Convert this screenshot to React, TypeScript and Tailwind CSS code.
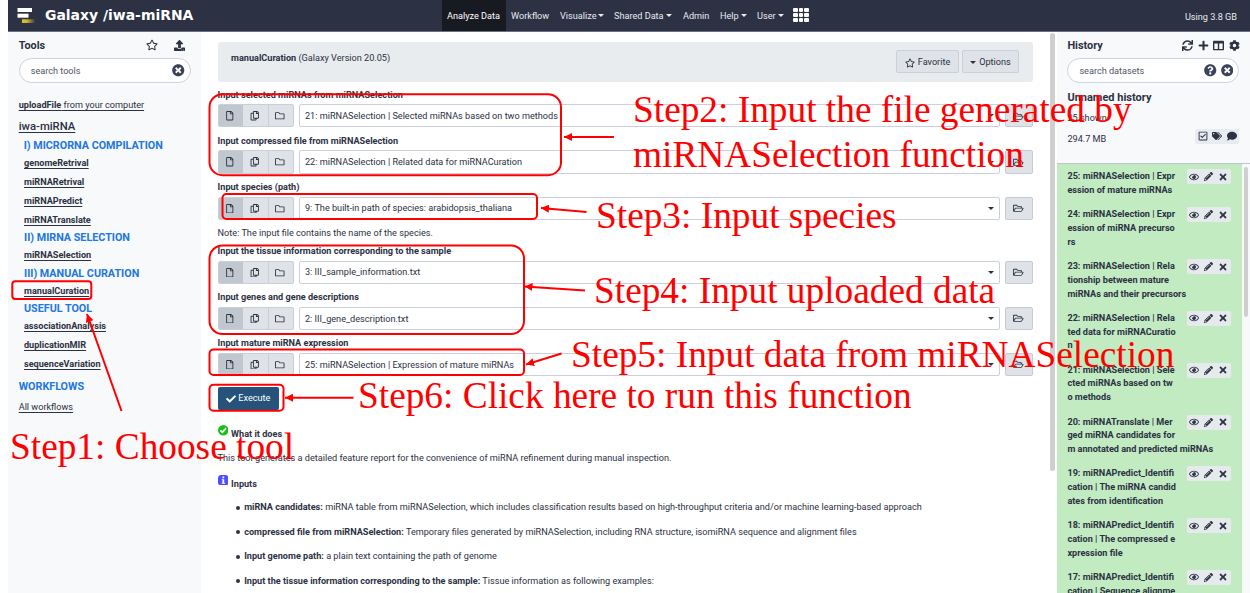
import React from "react";
import {
  FaCheck, FaCog, FaColumns, FaComment, FaPencilAlt, FaPlus, FaQuestionCircle,
  FaRegCheckSquare, FaRegCopy, FaRegEye, FaRegFile, FaRegFolder, FaRegFolderOpen, FaRegStar,
  FaSync, FaTags, FaTimes, FaTimesCircle, FaUpload,
} from "react-icons/fa";

function NavItem({ label, caret, active, width }: { label: string; caret?: boolean; active?: boolean; width: string }) {
  return (
    <div className={`flex h-full shrink-0 items-center pt-[3px] pl-[5px] ${width} ${active ? "bg-[#181a22] text-white" : ""}`}>
      {label}
      {caret && <span className="mb-[3px] ml-[2px] border-x-[3px] border-t-[3px] border-x-transparent border-t-current" />}
    </div>
  );
}

function Header() {
  return (
    <header className="flex h-[32px] shrink-0 items-stretch border-b border-[#6b7080] bg-[#2c3143] text-[9.14px] text-[#e9eaef]">
      <svg className="mt-[7px] ml-[9px] h-[17px] w-[19px] shrink-0" viewBox="0 0 19 17">
        <defs>
          <linearGradient id="gold"><stop offset="0" stopColor="#e0c32b" /><stop offset=".35" stopColor="#d3b82c" /><stop offset="1" stopColor="#2c3143" /></linearGradient>
        </defs>
        <rect x="0.5" y="1" width="14.5" height="4" fill="#fff" />
        <rect x="0.5" y="6.7" width="11" height="4" fill="#fff" />
        <rect x="5" y="12.3" width="13.5" height="3.7" fill="url(#gold)" />
      </svg>
      <div className="ml-[9px] flex w-[397px] shrink-0 items-center pb-[1px] font-['DejaVu_Sans'] text-[13.95px] font-bold whitespace-nowrap text-white">Galaxy /iwa-miRNA</div>
      <NavItem label="Analyze Data" active width="w-[64px]" />
      <NavItem label="Workflow" width="w-[49px]" />
      <NavItem label="Visualize" caret width="w-[54px]" />
      <NavItem label="Shared Data" caret width="w-[69px]" />
      <NavItem label="Admin" width="w-[37px]" />
      <NavItem label="Help" caret width="w-[37px]" />
      <NavItem label="User" caret width="w-[41px]" />
      <div className="mt-[8px] grid h-[14px] w-[16px] shrink-0 grid-cols-3 gap-[1px]">
        {Array.from({ length: 9 }, (_, i) => <span key={i} className="rounded-[1px] bg-white" />)}
      </div>
      <div className="ml-auto flex items-center pt-[4px] pr-[13px]">Using 3.8 GB</div>
    </header>
  );
}

const toolItems = [
  { t: "genomeRetrival", h: "h-[19.5px]" },
  { t: "miRNARetrival", h: "h-[19px]" },
  { t: "miRNAPredict", h: "h-[19px]" },
  { t: "miRNATranslate", h: "h-[18.5px]" },
  { t: "II) MIRNA SELECTION", h: "h-[17px]", head: true },
  { t: "miRNASelection", h: "h-[18.5px]" },
  { t: "III) MANUAL CURATION", h: "h-[17px]", head: true },
  { t: "manualCuration", h: "h-[18px]" },
  { t: "USEFUL TOOL", h: "h-[17px]", head: true },
  { t: "associationAnalysis", h: "h-[19px]" },
  { t: "duplicationMIR", h: "h-[19px]" },
  { t: "sequenceVariation", h: "h-[19px]" },
];

function SearchBox({ label, help }: { label: string; help?: boolean }) {
  return (
    <div className="mt-[4px] flex h-[25px] w-[172px] shrink-0 items-center rounded-full border border-[#cfd2e0] bg-white pr-[5px] pl-[11px] text-[9.14px] text-[#50566a]">
      <span className="pt-[3px]">{label}</span>
      <span className="ml-auto flex gap-[4px] text-[12.5px] text-[#3a4159]">
        {help && <FaQuestionCircle />}
        <FaTimesCircle />
      </span>
    </div>
  );
}

function ToolPanel() {
  return (
    <aside className="flex w-[193px] shrink-0 flex-col bg-[#f8f9fb] pl-[10.7px]">
      <div className="flex h-[22px] items-end">
        <span className="w-[127.3px] text-[10.8px] leading-[17px] font-bold">Tools</span>
        <FaRegStar className="mb-[3px] text-[12px]" />
        <FaUpload className="mb-[3.5px] ml-[16px] text-[11px]" />
      </div>
      <SearchBox label="search tools" />
      <div className="mt-[12px] flex h-[20px] items-center pt-[1px] text-[9.14px]">
        <span className="underline underline-offset-2"><b>uploadFile</b> from your computer</span>
      </div>
      <div className="flex h-[22px] items-center pt-[2px] text-[11.3px] font-medium underline underline-offset-2">iwa-miRNA</div>
      <div className="flex h-[16px] items-center pt-[2px] pl-[5px] text-[10.75px] font-bold text-[#2077df]">I) MICRORNA COMPILATION</div>
      {toolItems.map((i) => (
        <div key={i.t} className={`flex shrink-0 items-center pl-[5.3px] ${i.h} ${i.head ? "pt-[2px] text-[10.75px] font-bold text-[#2077df]" : "pt-[2px] text-[9.14px] font-bold underline underline-offset-2"}`}>{i.t}</div>
      ))}
      <div className="flex h-[25px] items-center pt-[2px] text-[10.75px] font-bold text-[#2077df]">WORKFLOWS</div>
      <div className="flex h-[17px] items-center pt-[2px] text-[9.14px] underline underline-offset-2">All workflows</div>
    </aside>
  );
}

function Field({ label, value, note }: { label: string; value: string; note?: string }) {
  return (
    <>
      <div className="h-[46.2px] shrink-0">
        <div className="h-[17.8px] text-[9.14px] leading-[16.4px] font-bold">{label}</div>
        <div className="flex h-[23.2px]">
          <div className="flex w-[76px] shrink-0 overflow-hidden rounded-[2px] border border-[#c9cedb] bg-[#dfe2e7] text-[9.5px]">
            <span className="flex w-[24px] items-center justify-center bg-[#c1c7cf] pr-[1px]"><FaRegFile /></span>
            <span className="flex w-[26px] items-center justify-center border-r border-[#c9cedb] pr-[1px]"><FaRegCopy /></span>
            <span className="flex flex-1 items-center justify-center pr-[1px]"><FaRegFolder /></span>
          </div>
          <div className="ml-[5px] flex w-[701px] shrink-0 items-center rounded-[2px] border border-[#cbcedd] bg-white pr-[5px] pl-[5.4px] text-[9.14px]">
            <span className="pt-[2px]">{value}</span>
            <span className="ml-auto border-x-[3px] border-t-[3px] border-x-transparent border-t-[#2c3143]" />
          </div>
          <div className="ml-[5px] flex w-[28px] shrink-0 items-center justify-center rounded-[2px] border border-[#c6cad8] bg-[#dfe2e7] text-[10.5px]"><FaRegFolderOpen /></div>
        </div>
      </div>
      {note && <div className="h-[17.9px] shrink-0 text-[9.14px] leading-[16.4px]">{note}</div>}
    </>
  );
}

const bullets = [
  ["miRNA candidates:", "miRNA table from miRNASelection, which includes classification results based on high-throughput criteria and/or machine learning-based approach"],
  ["compressed file from miRNASelection:", "Temporary files generated by miRNASelection, including RNA structure, isomiRNA sequence and alignment files"],
  ["Input genome path:", "a plain text containing the path of genome"],
  ["Input the tissue information corresponding to the sample:", "Tissue information as following examples:"],
];

function ToolForm() {
  return (
    <main className="flex w-[856px] shrink-0 bg-white pl-[16.6px]">
      <div className="flex w-[815.4px] shrink-0 flex-col pt-[10px]">
        <div className="mb-[4.5px] flex h-[40px] shrink-0 rounded-[3px] bg-[#e8ecef] pr-[14px] pl-[13.4px] text-[9.14px]">
          <div className="mt-[8px] leading-[17px]"><b>manualCuration</b> (Galaxy Version 20.05)</div>
          <div className="mt-[8px] ml-auto flex h-[23px] gap-[3px]">
            <div className="flex w-[63px] items-center justify-center gap-[3px] rounded-[2px] border border-[#cbcfdd] bg-[#dfe2e7] pt-[3px]"><FaRegStar className="text-[10px]" />Favorite</div>
            <div className="flex w-[57px] items-center justify-center gap-[3px] rounded-[2px] border border-[#cbcfdd] bg-[#dfe2e7] pt-[3px]"><span className="mb-[1px] border-x-[3px] border-t-[3px] border-x-transparent border-t-current" />Options</div>
          </div>
        </div>
        <Field label="Input selected miRNAs from miRNASelection" value="21: miRNASelection | Selected miRNAs based on two methods" />
        <Field label="Input compressed file from miRNASelection" value="22: miRNASelection | Related data for miRNACuration" />
        <Field label="Input species (path)" value="9: The built-in path of species: arabidopsis_thaliana" note="Note: The input file contains the name of the species." />
        <Field label="Input the tissue information corresponding to the sample" value="3: III_sample_information.txt" />
        <Field label="Input genes and gene descriptions" value="2: III_gene_description.txt" />
        <Field label="Input mature miRNA expression" value="25: miRNASelection | Expression of mature miRNAs" />
        <div className="mt-[5px] flex h-[23px] w-[61.5px] shrink-0 items-center justify-center gap-[2px] rounded-[2px] bg-[#25537b] pt-[2px] text-[9.14px] text-white"><FaCheck className="mb-[1px] text-[10px]" />Execute</div>
        <div className="mt-[15.5px] flex h-[15px] shrink-0 text-[9.14px] font-bold">
          <svg viewBox="0 0 10 10" className="mr-[3px] h-[10.5px] w-[10.5px]"><circle cx="5" cy="5" r="5" fill="#14c414" /><path d="M2.3 5.1 4.2 7 7.6 3" fill="none" stroke="#fff" strokeWidth="1.6" /></svg>
          <span className="pt-[1px] leading-[16px]">What it does</span>
        </div>
        <div className="mt-[9.5px] h-[17px] shrink-0 text-[9.14px] leading-[17px]">This tool generates a detailed feature report for the convenience of miRNA refinement during manual inspection.</div>
        <div className="mt-[8px] flex h-[15px] shrink-0 text-[9.14px] font-bold">
          <svg viewBox="0 0 10 10" className="mr-[3px] h-[10.5px] w-[10.5px]"><rect width="10" height="10" rx="3.2" fill="#4e4eff" /><path d="M4.2 1.5h1.7v1.5H4.2zM3.6 4h2.3v3.4h.8v1H3.5v-1h.8V5h-.7z" fill="#fff" /></svg>
          <span className="pt-[1px] leading-[16px]">Inputs</span>
        </div>
        <div className="mt-[6px] shrink-0">
          {bullets.map(([b, t]) => (
            <div key={b} className="flex h-[24.5px] items-center pl-[18px] text-[9.14px] whitespace-pre">
              <span className="mr-[4.6px] h-[4px] w-[4px] rounded-full bg-[#2c3143]" />
              <span className="pt-[1px]"><b>{b}</b> {t}</span>
            </div>
          ))}
        </div>
      </div>
      <div className="mt-[1px] ml-[17.5px] h-[438px] w-[4.5px] rounded-full bg-[#cfcfcf]" />
    </main>
  );
}

const datasets: string[][] = [
  ["25: miRNASelection | Expr", "ession of mature miRNAs"],
  ["24: miRNASelection | Expr", "ession of miRNA precurso", "rs"],
  ["23: miRNASelection | Rela", "tionship between mature", "miRNAs and their precursors"],
  ["22: miRNASelection | Rela", "ted data for miRNACuratio", "n"],
  ["21: miRNASelection | Sele", "cted miRNAs based on tw", "o methods"],
  ["20: miRNATranslate | Mer", "ged miRNA candidates for", "m annotated and predicted miRNAs"],
  ["19: miRNAPredict_Identifi", "cation | The miRNA candid", "ates from identification"],
  ["18: miRNAPredict_Identifi", "cation | The compressed e", "xpression file"],
  ["17: miRNAPredict_Identifi", "cation | Sequence alignme"],
];

function HistoryPanel() {
  return (
    <aside className="flex min-w-0 flex-1 flex-col bg-[#f8f9fb]">
      <div className="flex h-[131.5px] shrink-0 flex-col border-b border-[#bfc3d2] pr-[10px] pl-[10.4px]">
        <div className="flex h-[22px] items-end">
          <span className="text-[10.9px] leading-[17px] font-bold">History</span>
          <span className="mb-[3px] ml-auto flex gap-[4.7px] text-[11px]"><FaSync /><FaPlus /><FaColumns /><FaCog /></span>
        </div>
        <SearchBox label="search datasets" help />
        <div className="mt-[6px] h-[17px] text-[11px] leading-[18.4px] font-bold">Unnamed history</div>
        <div className="mt-[4px] h-[14px] text-[9.14px] leading-[16.4px]">25 shown</div>
        <div className="mt-[4.5px] flex h-[21px] items-start justify-between text-[9.14px]">
          <span className="pt-[3.5px] leading-[14px]">294.7 MB</span>
          <span className="mr-[1px] flex h-[15px] w-[44px] items-center justify-center gap-[4.5px] rounded-[2px] bg-[#e8ebef] text-[10px]"><FaRegCheckSquare /><FaTags /><FaComment /></span>
        </div>
      </div>
      <div className="flex min-h-0 flex-1">
        <div className="w-[185px] shrink-0 overflow-hidden bg-[#c2ebc2]">
          {datasets.map((lines) => (
            <div key={lines[0]} className="flex shrink-0 pt-[5.8px] pb-[4.9px] pl-[10.4px]">
              <div className="-mb-[1px] w-[119.6px] shrink-0 pt-[1px] text-[9.14px] leading-[13.7px] font-bold whitespace-nowrap">
                {lines.map((l) => <div key={l}>{l}</div>)}
              </div>
              <div className="flex h-[15px] w-[44px] shrink-0 items-center justify-center gap-[5px] rounded-[2px] bg-[#e6eaed] text-[10px]"><FaRegEye /><FaPencilAlt className="text-[9px]" /><FaTimes /></div>
            </div>
          ))}
        </div>
        <div className="mt-[3px] ml-[2px] h-[150px] w-[4px] rounded-full bg-[#cfcfcf]" />
      </div>
    </aside>
  );
}

const steps = [
  { t: "Step1: Choose tool", p: "left-[10px] top-[428px]" },
  { t: "Step2: Input the file generated by", p: "left-[633px] top-[91px]" },
  { t: "miRNASelection function", p: "left-[633px] top-[136px]" },
  { t: "Step3: Input species", p: "left-[596px] top-[197px]" },
  { t: "Step4: Input uploaded data", p: "left-[594px] top-[272px]" },
  { t: "Step5: Input data from miRNASelection", p: "left-[571px] top-[336px]" },
  { t: "Step6: Click here to run this function", p: "left-[358px] top-[377px]" },
];

const boxes = [
  [209.5, 94.2, 351.5, 81, 13],
  [222.5, 194, 314.5, 25, 4],
  [209.5, 245.5, 314.5, 88.5, 13],
  [209.5, 349.5, 314.5, 25.5, 4],
  [209.5, 384.8, 74, 26, 4],
  [12.3, 281.2, 79, 17.8, 3],
];

const arrows = [
  [614, 137, 564, 137],
  [586.5, 212, 541, 208],
  [585, 290.5, 524.5, 286.5],
  [561.5, 353.5, 526, 364.5],
  [353.5, 397.7, 285, 397.7],
  [121.5, 411, 87, 314],
];

function Annotations() {
  return (
    <div className="pointer-events-none absolute inset-0 font-['Liberation_Serif',serif] text-[37.33px] leading-none text-[#ff0000]">
      <svg className="absolute inset-0" width="1250" height="593" fill="none" stroke="#ff0000" strokeWidth="2">
        <defs>
          <marker id="head" markerUnits="userSpaceOnUse" markerWidth="9" markerHeight="8" refX="8" refY="4" orient="auto"><path d="M0 0 8 4 0 8z" fill="#ff0000" stroke="none" /></marker>
        </defs>
        {boxes.map(([x, y, w, h, r]) => <rect key={`${x}-${y}`} x={x} y={y} width={w} height={h} rx={r} />)}
        {arrows.map(([a, b, c, d]) => <path key={`${a}-${b}`} d={`M${a} ${b}L${c} ${d}`} markerEnd="url(#head)" />)}
      </svg>
      {steps.map((s) => <div key={s.t} className={`absolute whitespace-nowrap ${s.p}`}>{s.t}</div>)}
    </div>
  );
}

export default function App() {
  return (
    <div className="relative flex h-[593px] w-[1250px] flex-col overflow-hidden bg-white pl-[8px] font-['Roboto',sans-serif] text-[#2c3143]">
      <Header />
      <div className="flex min-h-0 flex-1">
        <ToolPanel />
        <ToolForm />
        <HistoryPanel />
      </div>
      <Annotations />
    </div>
  );
}
